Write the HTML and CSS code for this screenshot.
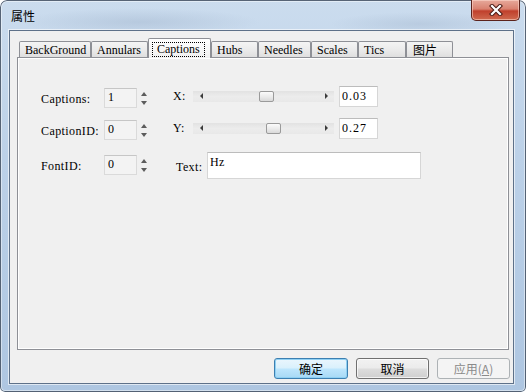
FILE: index.html
```html
<!DOCTYPE html>
<html lang="zh-CN">
<head>
    <meta charset="UTF-8">
    <title>属性</title>
    <link rel="stylesheet" href="styles.css">
</head>
<body>
    <div class="window">
        <div class="titlebar">
            <span class="title">属性</span>
            <button class="close" aria-label="关闭">
                <svg width="14" height="12" viewBox="0 0 14 12">
                    <path d="M3 2 L11 10 M11 2 L3 10" stroke="#4a1a14" stroke-width="4.2" stroke-linecap="square"/>
                    <path d="M3 2 L11 10 M11 2 L3 10" stroke="#ffffff" stroke-width="2.2" stroke-linecap="square"/>
                </svg>
            </button>
        </div>

        <div class="client">
            <!-- tab strip -->
            <div class="tabs">
                <div class="tab">BackGround</div>
                <div class="tab">Annulars</div>
                <div class="tab active"><span class="focus">Captions</span></div>
                <div class="tab">Hubs</div>
                <div class="tab">Needles</div>
                <div class="tab">Scales</div>
                <div class="tab">Tics</div>
                <div class="tab cjk">图片</div>
            </div>

            <div class="panel">
                <div class="row">
                    <span class="label">Captions:</span>
                    <div class="spin-edit">1</div>
                    <div class="spinner"><i class="up"></i><i class="down"></i></div>
                    <span class="axis">X:</span>
                    <div class="slider">
                        <span class="arrow"><i class="tri-left"></i></span>
                        <span class="channel"><span class="thumb" style="--pos:50px"></span></span>
                        <span class="arrow"><i class="tri-right"></i></span>
                    </div>
                    <div class="edit num">0.03</div>
                </div>
                <div class="row">
                    <span class="label">CaptionID:</span>
                    <div class="spin-edit">0</div>
                    <div class="spinner"><i class="up"></i><i class="down"></i></div>
                    <span class="axis">Y:</span>
                    <div class="slider">
                        <span class="arrow"><i class="tri-left"></i></span>
                        <span class="channel"><span class="thumb" style="--pos:57px"></span></span>
                        <span class="arrow"><i class="tri-right"></i></span>
                    </div>
                    <div class="edit num">0.27</div>
                </div>
                <div class="row row-text">
                    <span class="label">FontID:</span>
                    <div class="spin-edit">0</div>
                    <div class="spinner"><i class="up"></i><i class="down"></i></div>
                    <span class="text-label">Text:</span>
                    <div class="edit text">Hz</div>
                </div>
            </div>

            <div class="buttons">
                <button class="btn default">确定</button>
                <button class="btn">取消</button>
                <button class="btn" disabled>应用(<u>A</u>)</button>
            </div>
        </div>
    </div>
</body>
</html>
```

FILE: styles.css
```css
body {
    margin: 0;
    background: #ffffff;
}
.window {
    width: 526px;
    height: 392px;
    box-sizing: border-box;
    display: flex;
    flex-direction: column;
    border-radius: 7px 7px 5px 5px;
    background:
        radial-gradient(ellipse 120px 14px at 140px 22px, rgba(150,170,195,0.35), transparent),
        radial-gradient(ellipse 90px 12px at 420px 24px, rgba(150,170,195,0.3), transparent),
        linear-gradient(180deg, #cbdcee 0%, #bcd1e8 40%, #aec6e1 100%);
    box-shadow: inset 0 0 0 1px rgba(40,55,75,0.75), inset 0 0 0 2px rgba(255,255,255,0.45);
    overflow: hidden;
}

/* title bar */
.titlebar {
    height: 30px;
    flex: none;
    display: flex;
    align-items: flex-start;
    padding-left: 11px;
}
.title {
    font-family: "Noto Sans CJK SC", sans-serif;
    font-size: 12px;
    line-height: 14px;
    padding-top: 9px;
    color: #000;
}
.close {
    margin-left: auto;
    margin-right: 6px;
    width: 49px;
    height: 21px;
    padding: 0;
    border: 1px solid #5b231c;
    border-top: none;
    border-radius: 0 0 5px 5px;
    background: linear-gradient(180deg, #e6a99b 0%, #d98170 45%, #c0402c 55%, #cf6a4f 100%);
    box-shadow: inset 0 0 0 1px rgba(255,220,210,0.55);
    display: flex;
    align-items: center;
    justify-content: center;
}

/* client area */
.client {
    flex: 1;
    margin: 0 12px 8px 9px;
    background: #f0f0f0;
    border: 1px solid #5e7189;
    box-shadow: 0 0 0 1px rgba(255,255,255,0.6);
    padding: 7px 4px 4px 7px;
    display: flex;
    flex-direction: column;
    font-family: "Liberation Serif", "Noto Sans CJK SC", serif;
    font-size: 12px;
    letter-spacing: 0.4px;
    color: #000;
}

.tabs {
    height: 20px;
    display: flex;
    align-items: flex-end;
    padding-left: 2px;
    margin-bottom: -1px;
    position: relative;
    z-index: 1;
}
.tab {
    box-sizing: border-box;
    height: 16px;
    margin-bottom: 1px;
    border: 1px solid #8e9096;
    border-bottom: none;
    border-radius: 2px 2px 0 0;
    background: linear-gradient(180deg, #f4f4f4 0%, #ebebeb 50%, #dfdfdf 100%);
    padding: 0 0 0 5px;
    line-height: 16px;
    letter-spacing: 0;
    white-space: nowrap;
}
.tab:nth-child(1) { width: 72px; }
.tab:nth-child(2) { width: 57px; }
.tab:nth-child(4) { width: 47px; }
.tab:nth-child(5) { width: 53px; }
.tab:nth-child(6) { width: 47px; }
.tab:nth-child(7) { width: 48px; }
.tab:nth-child(8) { width: 47px; }
.tab.cjk {
    font-family: "Noto Sans CJK SC", sans-serif;
    font-size: 12px;
    padding-left: 6px;
    line-height: 15px;
}
.tab.active {
    width: 63px;
    height: 20px;
    margin-bottom: 0;
    padding: 2px 0 0 3px;
    background: linear-gradient(180deg, #ffffff 0%, #f6f6f6 60%, #f0f0f0 100%);
}
.focus {
    display: inline-block;
    border: 1px dotted #000;
    padding: 0 4px 0 4px;
    line-height: 13px;
}

.panel {
    flex: 1;
    border: 1px solid #8e9096;
    box-shadow: inset 0 0 0 1px #ffffff;
    background: #f0f0f0;
    padding: 28px 0 0 23px;
}
.row {
    display: flex;
    align-items: center;
    height: 24px;
}
.row + .row {
    margin-top: 8px;
}
.row-text {
    height: 26px;
    margin-top: 10px !important;
}
.label {
    width: 63px;
    flex: none;
    margin-top: 3px;
}
.spin-edit {
    box-sizing: border-box;
    width: 33px;
    height: 20px;
    border: 1px solid #dadada;
    border-top-color: #c6c6c6;
    background: #f3f3f3;
    padding: 1px 0 0 3px;
    line-height: 15px;
}
.spinner {
    width: 10px;
    height: 20px;
    margin-left: 2px;
    display: flex;
    flex-direction: column;
    justify-content: space-between;
    align-items: center;
    padding: 4px 0 3px;
    box-sizing: border-box;
}
.spinner i {
    width: 0;
    height: 0;
    border-left: 3px solid transparent;
    border-right: 3px solid transparent;
}
.spinner .up { border-bottom: 4px solid #5c5c5c; }
.spinner .down { border-top: 4px solid #5c5c5c; }

.axis {
    width: 20px;
    margin-left: 24px;
    margin-top: -4px;
}
.slider {
    width: 141px;
    height: 11px;
    margin-top: -4px;
    display: flex;
    background: linear-gradient(180deg, #e2e2e2 0%, #ececec 50%, #e8e8e8 100%);
}
.arrow {
    width: 16px;
    display: flex;
    align-items: center;
    justify-content: center;
}
.tri-left, .tri-right {
    width: 0;
    height: 0;
    border-top: 3px solid transparent;
    border-bottom: 3px solid transparent;
}
.tri-left { border-right: 3px solid #3c3c3c; }
.tri-right { border-left: 3px solid #3c3c3c; }
.channel {
    flex: 1;
    display: flex;
}
.thumb {
    width: 15px;
    height: 11px;
    box-sizing: border-box;
    margin-left: var(--pos);
    border: 1px solid #9a9a9a;
    border-radius: 2px;
    background: linear-gradient(180deg, #fbfbfb 0%, #ececec 50%, #d9d9d9 100%);
}

.edit {
    box-sizing: border-box;
    background: #ffffff;
    border: 1px solid #d6d6d6;
    border-top-color: #bcbcbc;
}
.num {
    width: 39px;
    height: 21px;
    margin-left: 5px;
    margin-top: -3px;
    padding: 2px 0 0 2px;
    line-height: 15px;
    letter-spacing: 1px;
}
.text-label {
    width: 31px;
    margin-left: 27px;
    margin-top: 4px;
}
.edit.text {
    width: 214px;
    height: 27px;
    padding: 3px 0 0 2px;
    line-height: 13px;
}

/* dialog buttons */
.buttons {
    display: flex;
    justify-content: flex-end;
    gap: 8px;
    margin-top: 8px;
    margin-right: -1px;
}
.btn {
    width: 73px;
    height: 21px;
    padding: 0;
    font-family: "Noto Sans CJK SC", sans-serif;
    font-size: 12px;
    letter-spacing: 0;
    color: #000;
    border: 1px solid #707070;
    border-radius: 3px;
    background: linear-gradient(180deg, #f2f2f2 0%, #ebebeb 49%, #dddddd 51%, #cfcfcf 100%);
    box-shadow: inset 0 0 0 1px rgba(255,255,255,0.7);
}
.btn.default {
    width: 74px;
    border-color: #3c7fb1;
    background: linear-gradient(180deg, #eaf6fd 0%, #d9f0fc 49%, #bee6fd 51%, #a7d9f5 100%);
    box-shadow: inset 0 0 0 1px #8fd0f3;
}
.btn:disabled {
    color: #8a8a8a;
    border-color: #adb2b5;
    background: #f4f4f4;
    box-shadow: none;
}
```
